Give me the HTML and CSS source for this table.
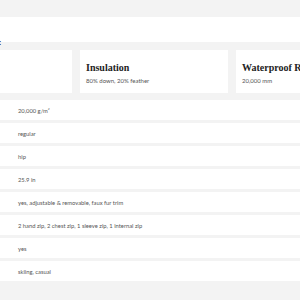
FILE: index.html
```html
<!DOCTYPE html>
<html>
<head>
<meta charset="utf-8">
<link rel="stylesheet" href="styles.css">
</head>
<body>
<div class="page">
  <div class="band"></div>
  <div class="mark">:</div>
  <div class="cards">
    <div class="card card-cut"></div>
    <div class="card">
      <div class="card-title">Insulation</div>
      <div class="card-sub">80% down, 20% feather</div>
    </div>
    <div class="card">
      <div class="card-title">Waterproof Rating</div>
      <div class="card-sub">20,000 mm</div>
    </div>
  </div>
  <div class="rows">
    <div class="row">20,000 g/m²</div>
    <div class="row">regular</div>
    <div class="row">hip</div>
    <div class="row">25.9 in</div>
    <div class="row">yes, adjustable &amp; removable, faux fur trim</div>
    <div class="row">2 hand zip, 2 chest zip, 1 sleeve zip, 1 internal zip</div>
    <div class="row">yes</div>
    <div class="row">skiing, casual</div>
  </div>
</div>
</body>
</html>
```

FILE: styles.css
```css
html, body {
  margin: 0;
  padding: 0;
  background: #f3f3f3;
  overflow: hidden;
  width: 300px;
  height: 300px;
}
.page {
  padding-top: 17px;
  font-family: Lato, "Liberation Sans", sans-serif;
}
.band {
  height: 25px;
  background: #ffffff;
}
.mark {
  height: 0;
  font-size: 8px;
  line-height: 0;
  color: #222;
  margin-left: -1px;
  font-weight: 700;
}
.cards {
  display: flex;
  gap: 8px;
  margin-top: 8px;
  height: 43px;
}
.card {
  flex: 0 0 148px;
  background: #ffffff;
  box-sizing: border-box;
  padding: 12px 6px 0 6px;
  white-space: nowrap;
  overflow: hidden;
}
.card-cut {
  flex: 0 0 72px;
}
.card-title {
  font-family: "Liberation Serif", "DejaVu Serif", serif;
  font-weight: 700;
  font-size: 10px;
  line-height: 12px;
  color: #222;
}
.card-sub {
  font-size: 6px;
  line-height: 9px;
  color: #555;
  margin-top: 2px;
}
.rows {
  margin-top: 7px;
  display: flex;
  flex-direction: column;
  gap: 3px;
}
.row {
  height: 20px;
  background: #ffffff;
  padding-left: 18px;
  display: flex;
  align-items: center;
  font-size: 5.8px;
  color: #555;
  white-space: nowrap;
}
```
